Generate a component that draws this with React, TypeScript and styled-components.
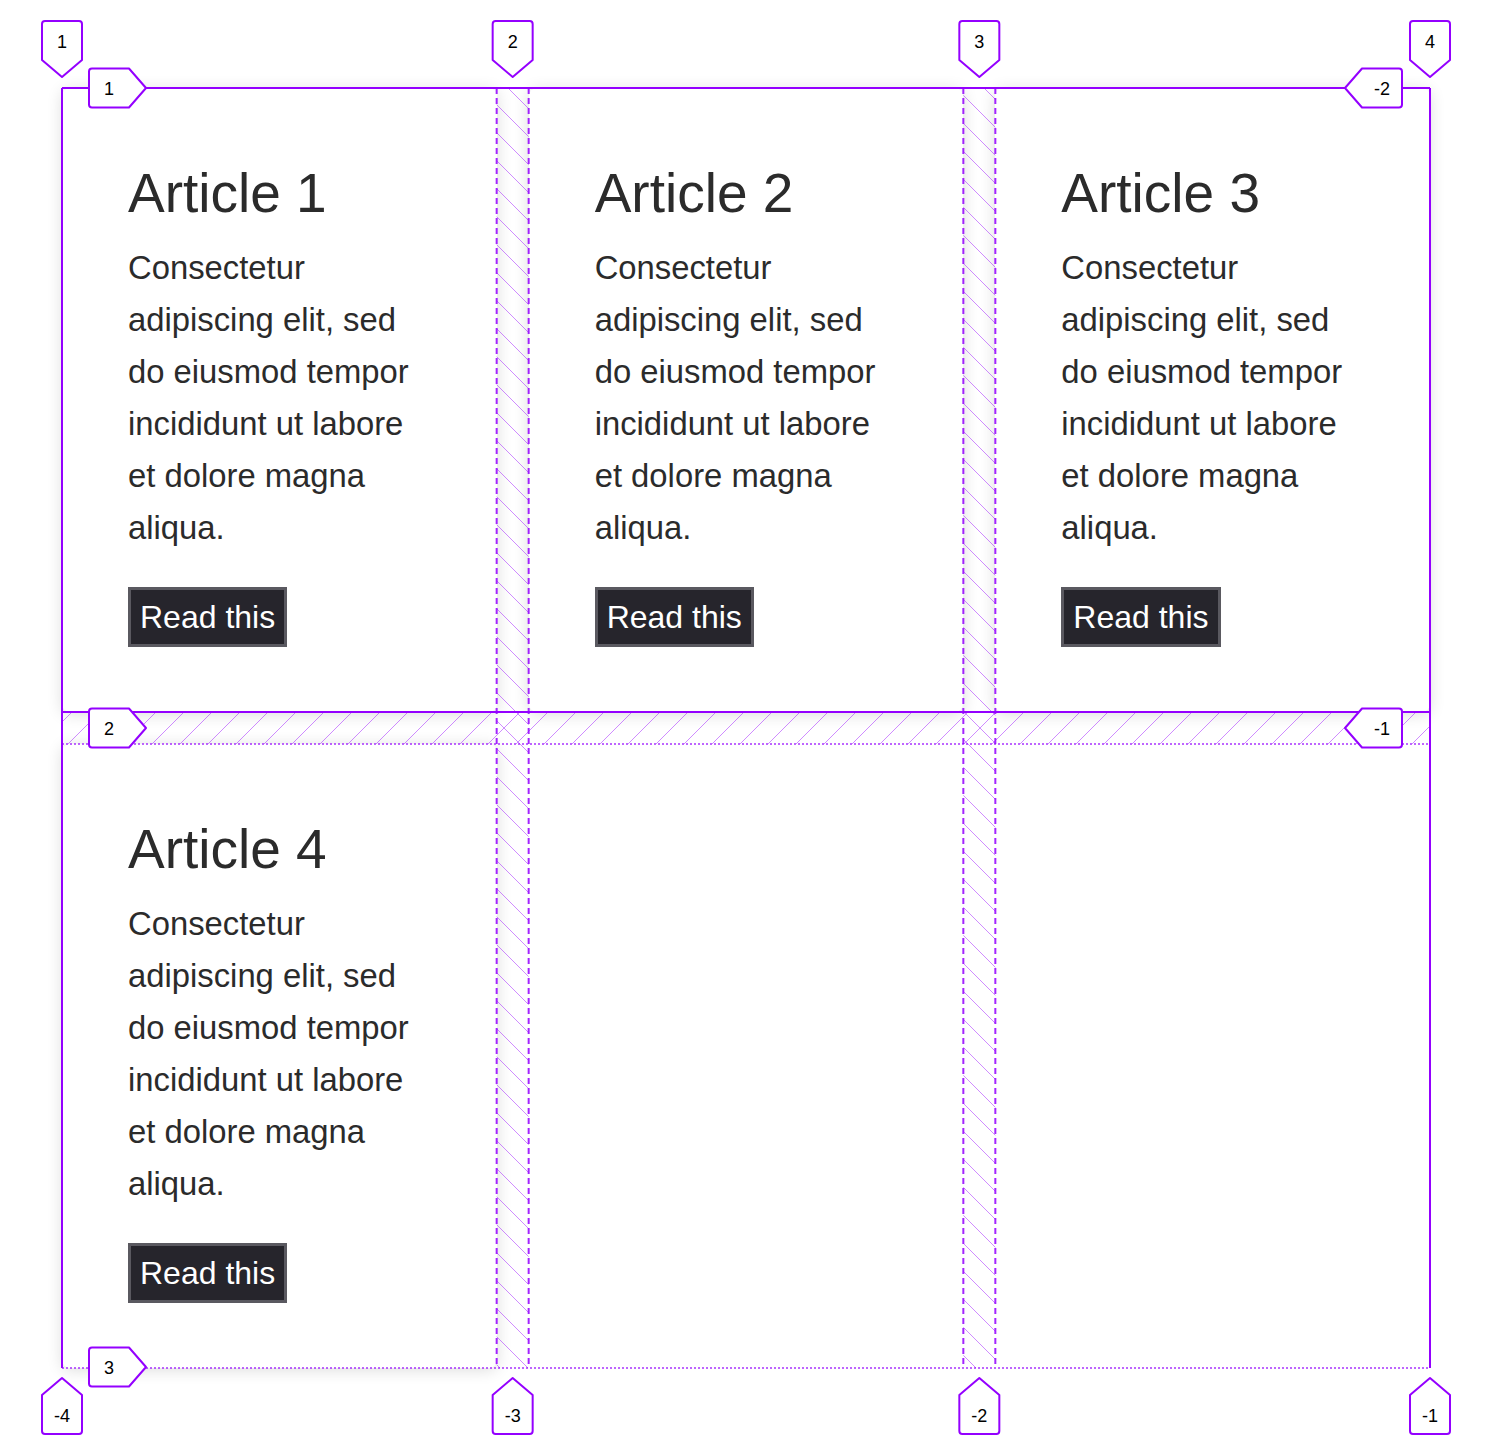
import React from "react";
import styled, { createGlobalStyle } from "styled-components";

const GRID_LEFT = 62;
const GRID_TOP = 88;
const GRID_W = 1368;
const ROW_H = 624;
const GAP = 32;
const COL_W = (GRID_W - GAP * 2) / 3;
const PURPLE = "#9400ff";

const GlobalStyle = createGlobalStyle`
  * { box-sizing: border-box; }
  body {
    margin: 0;
    background: #fff;
    font-family: "Liberation Sans", Arial, sans-serif;
  }
`;

const Page = styled.div`
  position: relative;
  width: 1494px;
  min-height: 1446px;
  padding: ${GRID_TOP}px 0 0 ${GRID_LEFT}px;
`;

const Grid = styled.main`
  display: grid;
  width: ${GRID_W}px;
  grid-template-columns: repeat(3, 1fr);
  grid-template-rows: ${ROW_H}px;
  grid-auto-rows: ${ROW_H}px;
  gap: ${GAP}px;
`;

const Card = styled.article`
  background: #fff;
  border-radius: 8px;
  box-shadow: 0 2px 16px rgba(0, 0, 0, 0.14);
  padding: 72px 70px 64px 66px;
  color: #2b2b2b;
`;

const Title = styled.h2`
  margin: 0;
  font-size: 55px;
  font-weight: 400;
  line-height: 66px;
`;

const Text = styled.p`
  margin: 16px 0 0;
  font-size: 32.8px;
  line-height: 52px;
`;

const ReadButton = styled.button`
  margin-top: 33px;
  padding: 9px 9px 8px;
  border: 3px solid #5a5960;
  background: #26252c;
  color: #fff;
  font-family: "Liberation Sans", Arial, sans-serif;
  font-size: 32px;
  line-height: normal;
  cursor: pointer;
`;

const Overlay = styled.svg`
  position: absolute;
  left: 0;
  top: 0;
  pointer-events: none;
`;

type Dir = "down" | "up" | "right" | "left";

const labelPath = (dir: Dir, x: number, y: number): string => {
  const r = 3;
  const w = 40;
  const tri = 17;
  const h = 39;
  if (dir === "down") {
    const l = x - w / 2, rr = x + w / 2, s = y - tri, t = s - h;
    return `M${l},${s} L${l},${t + r} Q${l},${t} ${l + r},${t} L${rr - r},${t} Q${rr},${t} ${rr},${t + r} L${rr},${s} L${x},${y} Z`;
  }
  if (dir === "up") {
    const l = x - w / 2, rr = x + w / 2, s = y + tri, b = s + h;
    return `M${l},${s} L${l},${b - r} Q${l},${b} ${l + r},${b} L${rr - r},${b} Q${rr},${b} ${rr},${b - r} L${rr},${s} L${x},${y} Z`;
  }
  if (dir === "right") {
    const s = x - tri, l = s - w, t = y - h / 2, b = y + h / 2;
    return `M${s},${t} L${l + r},${t} Q${l},${t} ${l},${t + r} L${l},${b - r} Q${l},${b} ${l + r},${b} L${s},${b} L${x},${y} Z`;
  }
  const s = x + tri, rr = s + w, t = y - h / 2, b = y + h / 2;
  return `M${s},${t} L${rr - r},${t} Q${rr},${t} ${rr},${t + r} L${rr},${b - r} Q${rr},${b} ${rr - r},${b} L${s},${b} L${x},${y} Z`;
};

const labelCenter = (dir: Dir, x: number, y: number): [number, number] => {
  if (dir === "down") return [x, y - 17 - 19.5];
  if (dir === "up") return [x, y + 17 + 19.5];
  if (dir === "right") return [x - 17 - 20, y];
  return [x + 17 + 20, y];
};

const GridLabel = ({ dir, x, y, text }: { dir: Dir; x: number; y: number; text: string }) => {
  const [cx, cy] = labelCenter(dir, x, y);
  return (
    <g>
      <path d={labelPath(dir, x, y)} fill="#fff" stroke={PURPLE} strokeWidth={2} strokeLinejoin="round" />
      <text
        x={cx}
        y={cy + 1}
        textAnchor="middle"
        dominantBaseline="central"
        fontSize={18}
        fontFamily="Liberation Sans, Arial, sans-serif"
        fill="#000"
      >
        {text}
      </text>
    </g>
  );
};

const GridHighlighter = () => {
  const right = GRID_LEFT + GRID_W;
  const bottom = GRID_TOP + ROW_H * 2 + GAP;
  const rowEnd = GRID_TOP + ROW_H;
  const row2 = rowEnd + GAP;
  const colX = [
    GRID_LEFT + COL_W,
    GRID_LEFT + COL_W + GAP,
    GRID_LEFT + COL_W * 2 + GAP,
    GRID_LEFT + COL_W * 2 + GAP * 2,
  ];
  const colMid = [GRID_LEFT, (colX[0] + colX[1]) / 2, (colX[2] + colX[3]) / 2, right];

  return (
    <Overlay width={1494} height={1446} viewBox="0 0 1494 1446">
      <defs>
        <pattern id="hatchCol" width="28" height="28" patternUnits="userSpaceOnUse">
          <path d="M0,0 L28,28 M-7,21 L7,35 M21,-7 L35,7" stroke={PURPLE} strokeWidth={1} opacity={0.45} />
        </pattern>
        <pattern id="hatchRow" width="28" height="28" patternUnits="userSpaceOnUse">
          <path d="M0,28 L28,0 M-7,7 L7,-7 M21,35 L35,21" stroke={PURPLE} strokeWidth={1} opacity={0.45} />
        </pattern>
      </defs>

      {/* gap hatching */}
      <rect x={colX[0]} y={GRID_TOP} width={GAP} height={bottom - GRID_TOP} fill="url(#hatchCol)" />
      <rect x={colX[2]} y={GRID_TOP} width={GAP} height={bottom - GRID_TOP} fill="url(#hatchCol)" />
      <rect x={GRID_LEFT} y={rowEnd} width={GRID_W} height={GAP} fill="url(#hatchRow)" />

      {/* inner column lines */}
      {colX.map((x) => (
        <line key={x} x1={x} y1={GRID_TOP} x2={x} y2={bottom} stroke={PURPLE} strokeWidth={2} strokeDasharray="6 4" opacity={0.85} />
      ))}

      {/* implicit row lines */}
      <line x1={GRID_LEFT} y1={row2} x2={right} y2={row2} stroke={PURPLE} strokeWidth={2} strokeDasharray="2 2" opacity={0.6} />
      <line x1={GRID_LEFT} y1={bottom} x2={right} y2={bottom} stroke={PURPLE} strokeWidth={2} strokeDasharray="2 2" opacity={0.6} />

      {/* explicit edges */}
      <line x1={GRID_LEFT} y1={GRID_TOP} x2={right} y2={GRID_TOP} stroke={PURPLE} strokeWidth={2} />
      <line x1={GRID_LEFT} y1={rowEnd} x2={right} y2={rowEnd} stroke={PURPLE} strokeWidth={2} />
      <line x1={GRID_LEFT} y1={GRID_TOP} x2={GRID_LEFT} y2={bottom} stroke={PURPLE} strokeWidth={2} />
      <line x1={right} y1={GRID_TOP} x2={right} y2={bottom} stroke={PURPLE} strokeWidth={2} />

      {/* labels */}
      {colMid.map((x, i) => (
        <GridLabel key={`t${i}`} dir="down" x={x} y={77} text={String(i + 1)} />
      ))}
      {colMid.map((x, i) => (
        <GridLabel key={`b${i}`} dir="up" x={x} y={bottom + 10} text={String(i - 4)} />
      ))}
      <GridLabel dir="right" x={146} y={GRID_TOP} text="1" />
      <GridLabel dir="right" x={146} y={rowEnd + GAP / 2} text="2" />
      <GridLabel dir="right" x={146} y={bottom - 1} text="3" />
      <GridLabel dir="left" x={1345} y={GRID_TOP} text="-2" />
      <GridLabel dir="left" x={1345} y={rowEnd + GAP / 2} text="-1" />
    </Overlay>
  );
};

const articles = [1, 2, 3, 4];

const App = () => (
  <Page>
    <GlobalStyle />
    <Grid>
      {articles.map((n) => (
        <Card key={n}>
          <Title>Article {n}</Title>
          <Text>
            Consectetur adipiscing elit, sed do eiusmod tempor incididunt ut labore et dolore magna aliqua.
          </Text>
          <ReadButton>Read this</ReadButton>
        </Card>
      ))}
    </Grid>
    <GridHighlighter />
  </Page>
);

export default App;
